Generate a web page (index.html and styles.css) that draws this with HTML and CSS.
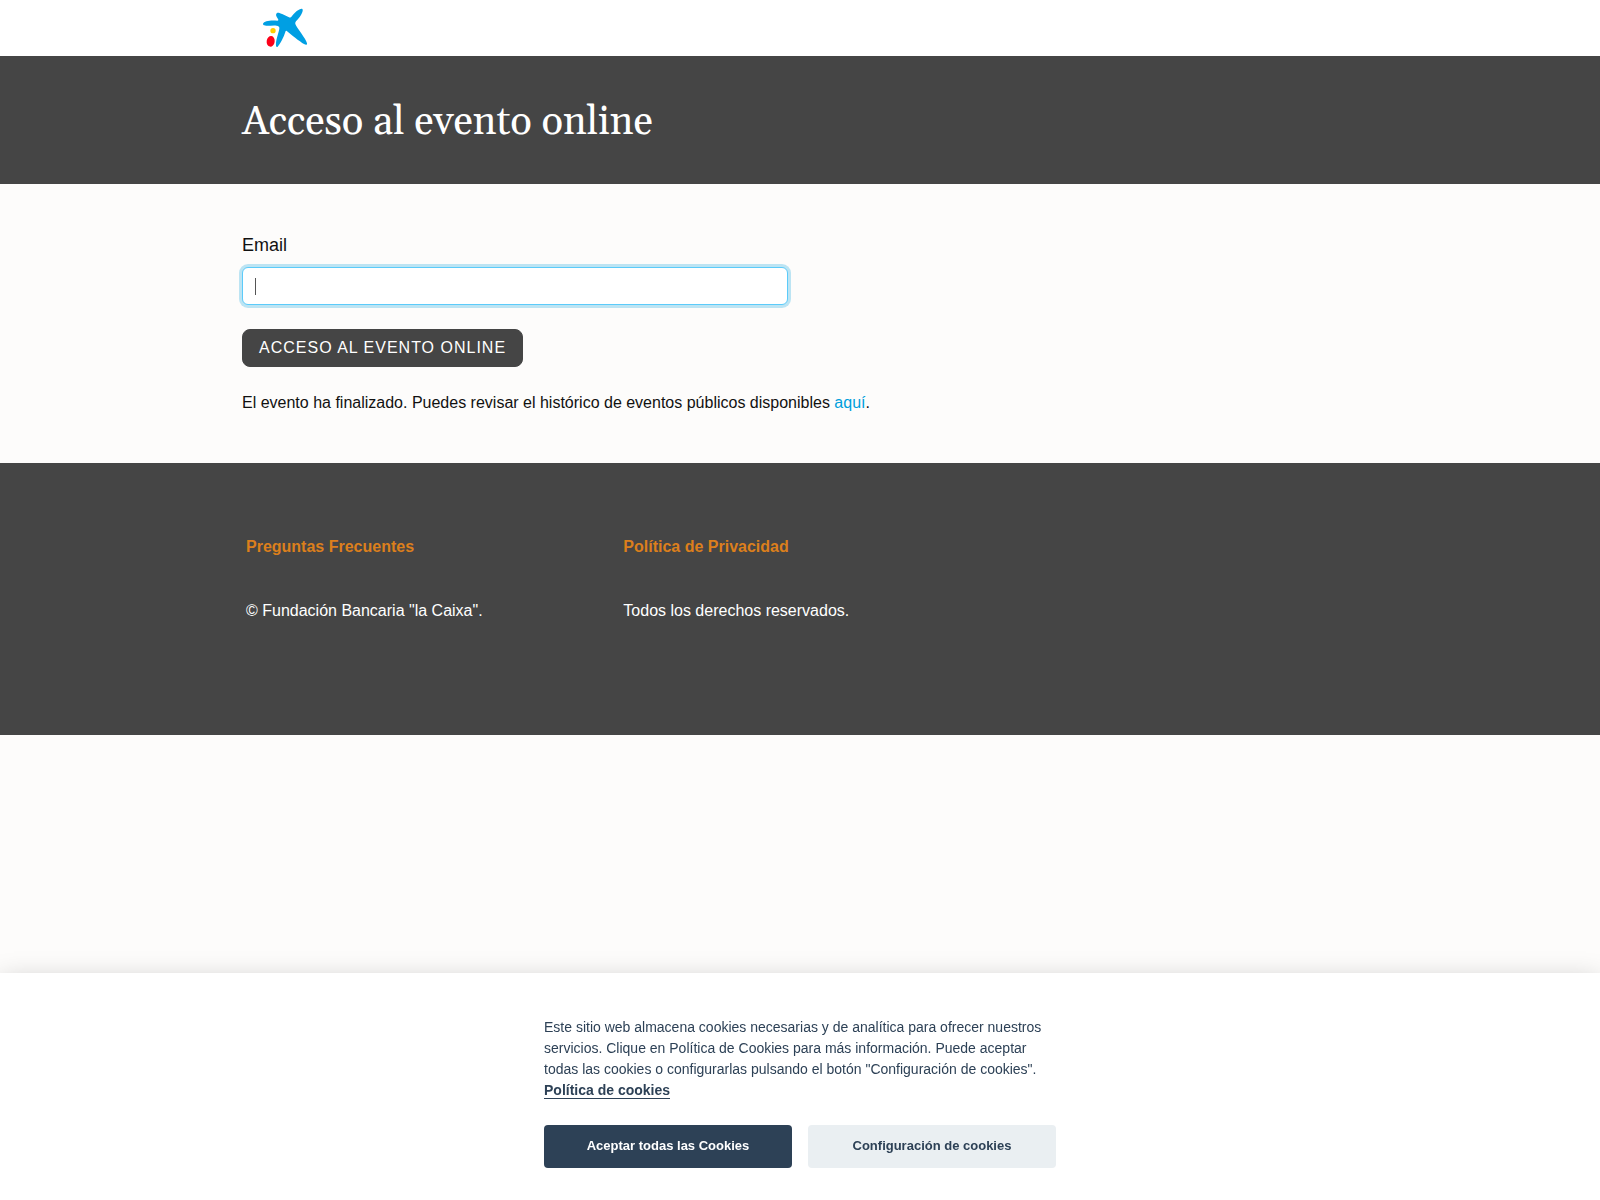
FILE: index.html
```html
<!DOCTYPE html>
<html lang="es">
<head>
<meta charset="UTF-8">
<meta name="viewport" content="width=device-width, initial-scale=1.0">
<title>Acceso al evento online</title>
<link rel="stylesheet" href="styles.css">
</head>
<body>
<header class="header">
  <div class="container">
    <a class="logo" href="#" aria-label="Inicio">
      <svg width="70" height="56" viewBox="0 0 210 168">
        <path fill="#009fe3" d="M39 71 C42 63 61 60 82 62 C85 62 86 60 84 57 C78 49 76 43 81 39 C86 36 103 45 117 52 C120 54 123 52 126 48 C134 37 148 25 156 26 C162 29 155 44 146 55 C140 62 134 67 136 72 C140 83 168 116 171 130 C172 135 168 136 162 132 C149 124 121 102 113 95 C109 91 107 92 106 96 C102 110 90 133 83 140 C79 143 77 138 78 129 C79 115 87 95 88 86 C89 80 86 78 80 77 C67 75 48 80 40 75 Z"/>
        <circle fill="#ffcd00" cx="69" cy="92" r="8"/>
        <ellipse fill="#fc0019" cx="62" cy="124" rx="12" ry="16" transform="rotate(8 62 124)"/>
      </svg>
    </a>
  </div>
</header>

<div class="banner">
  <div class="container">
    <h1>Acceso al evento online</h1>
  </div>
</div>

<main class="main">
  <div class="container">
    <form class="form">
      <label for="email">Email</label>
      <input type="text" id="email" name="email" autocomplete="off" autofocus>
      <button class="btn" type="submit">Acceso al evento online</button>
    </form>
    <p>El evento ha finalizado. Puedes revisar el histórico de eventos públicos disponibles <a href="#">aquí</a>.</p>
  </div>
</main>

<footer class="footer">
  <div class="container footer-grid">
    <a href="#">Preguntas Frecuentes</a>
    <a href="#">Política de Privacidad</a>
    <span></span>
    <span>© Fundación Bancaria "la Caixa".</span>
    <span>Todos los derechos reservados.</span>
  </div>
</footer>

<div class="cookies" role="dialog" aria-label="Cookies">
  <div class="cookies-inner">
    <p>Este sitio web almacena cookies necesarias y de analítica para ofrecer nuestros servicios. Clique en Política de Cookies para más información. Puede aceptar todas las cookies o configurarlas pulsando el botón "Configuración de cookies". <a href="#">Política de cookies</a></p>
    <div class="cookies-btns">
      <button class="accept" type="button">Aceptar todas las Cookies</button>
      <button class="settings" type="button">Configuración de cookies</button>
    </div>
  </div>
</div>
</body>
</html>
```
FILE: styles.css
```css
* {
  box-sizing: border-box;
}

body {
  margin: 0;
  background-color: #fdfcfb;
  color: #111;
  font-family: "Liberation Sans", Arial, sans-serif;
  font-size: 16px;
  line-height: 24px;
}

.container {
  max-width: 1140px;
  margin: 0 auto;
  padding: 0 12px;
}

.header {
  background-color: #fff;
}

.logo {
  display: flex;
  padding-left: 8px;
}

.banner {
  padding: 43px 0 37px;
  background-color: #454545;
  color: #fff;
}

.banner h1 {
  margin: 0;
  font-family: Gelasio, Georgia, "Liberation Serif", serif;
  font-size: 40px;
  font-weight: 400;
  line-height: 48px;
}

.main {
  padding: 48px 0;
}

.main p {
  margin: 24px 0 0;
}

.main a {
  color: #009fdc;
  text-decoration: none;
}

.form {
  display: flex;
  flex-direction: column;
  align-items: flex-start;
}

.form label {
  margin-bottom: 8px;
  font-size: 18px;
  line-height: 27px;
}

.form input {
  width: calc(50% - 12px);
  height: 38px;
  margin-bottom: 24px;
  padding: 6px 12px;
  border: 1px solid #ced4da;
  border-radius: 6px;
  background-color: #fff;
  color: #555;
  font-family: inherit;
  font-size: 16px;
}

.form input:focus {
  border-color: #5ccbfa;
  outline: 0;
  box-shadow: 0 0 0 3px #bce4f3;
  caret-color: transparent;
}

.form input:focus:placeholder-shown,
.form input:focus {
  background: #fff linear-gradient(#555, #555) 12px 10px / 1px 17px no-repeat;
}

.btn {
  height: 38px;
  padding: 0 16px;
  border: 1px solid #454545;
  border-radius: 8px;
  background-color: #454545;
  color: #fff;
  font-family: inherit;
  font-size: 16px;
  letter-spacing: 1px;
  text-transform: uppercase;
  cursor: pointer;
}

.footer {
  padding: 72px 0 112px;
  background-color: #454545;
  color: #fff;
}

.footer-grid {
  display: grid;
  grid-template-columns: repeat(3, 1fr);
  gap: 40px 16px;
  padding: 0 8px 0 16px;
}

.footer a {
  color: #dc7f1c;
  font-weight: 700;
  text-decoration: none;
}

.cookies {
  position: fixed;
  right: 0;
  bottom: 0;
  left: 0;
  padding: 44px 32px 32px;
  background-color: #fff;
  box-shadow: 0 10px 28px rgba(2, 2, 3, 0.28);
  color: #2d4156;
  will-change: transform;
}

.cookies-inner {
  max-width: 512px;
  margin: 0 auto;
}

.cookies p {
  margin: 0 0 24px;
  font-size: 14px;
  line-height: 21px;
}

.cookies a {
  border-bottom: 1px solid #2d4156;
  color: #2d4156;
  font-weight: 700;
  text-decoration: none;
}

.cookies-btns {
  display: grid;
  grid-template-columns: 1fr 1fr;
  gap: 16px;
}

.cookies button {
  height: 43px;
  padding: 0 16px 2px;
  border: 0;
  border-radius: 4px;
  font-family: inherit;
  font-size: 13px;
  font-weight: 700;
  cursor: pointer;
}

.accept {
  background-color: #2d4156;
  color: #fff;
}

.settings {
  background-color: #eaeff2;
  color: #2d4156;
}
```
